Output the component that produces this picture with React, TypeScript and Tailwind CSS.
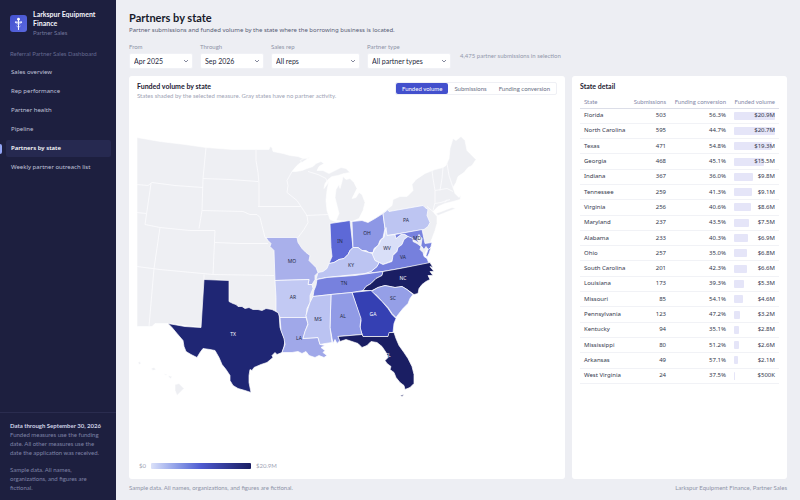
import React, { useState } from "react";

const NAV = [
  "Sales overview",
  "Rep performance",
  "Partner health",
  "Pipeline",
  "Partners by state",
  "Weekly partner outreach list",
];

const ROWS: [string, number, string, string, number][] = [
  ["Florida", 503, "56.3%", "$20.9M", 20.9],
  ["North Carolina", 595, "44.7%", "$20.7M", 20.7],
  ["Texas", 471, "54.8%", "$19.3M", 19.3],
  ["Georgia", 468, "45.1%", "$15.5M", 15.5],
  ["Indiana", 367, "36.0%", "$9.8M", 9.8],
  ["Tennessee", 259, "41.3%", "$9.1M", 9.1],
  ["Virginia", 256, "40.6%", "$8.6M", 8.6],
  ["Maryland", 237, "43.5%", "$7.5M", 7.5],
  ["Alabama", 233, "40.3%", "$6.9M", 6.9],
  ["Ohio", 257, "35.0%", "$6.8M", 6.8],
  ["South Carolina", 201, "42.3%", "$6.6M", 6.6],
  ["Louisiana", 173, "39.3%", "$5.3M", 5.3],
  ["Missouri", 85, "54.1%", "$4.6M", 4.6],
  ["Pennsylvania", 123, "47.2%", "$3.2M", 3.2],
  ["Kentucky", 94, "35.1%", "$2.8M", 2.8],
  ["Mississippi", 80, "51.2%", "$2.6M", 2.6],
  ["Arkansas", 49, "57.1%", "$2.1M", 2.1],
  ["West Virginia", 24, "37.5%", "$500K", 0.5],
];

const FILTERS = [
  { id: "from", label: "From", value: "Apr 2025", width: "w-16" },
  { id: "through", label: "Through", value: "Sep 2026", width: "w-16" },
  { id: "rep", label: "Sales rep", value: "All reps", width: "w-[89px]" },
  { id: "type", label: "Partner type", value: "All partner types", width: "w-[84px]" },
];

const MEASURES = ["Funded volume", "Submissions", "Funding conversion"];

// Inactive land: mainland outline, Lower Michigan, Long Island and Hawaii.
const LAND = [
  "M137 137L160 141L185 144L206 147L232 149L256 149L269 149L270 146L272 147L273 151L283 153L290 155L298 156L303 158L310 157L302 161L297 165L292 171L296 171L302 170L307 168L313 166L316 163L321 161L324 163L319 166L317 170L323 170L329 173L335 170L341 167L346 168L350 172L344 173L338 175L332 176L328 179L325 183L324 188L327 184L329 180L327 190L326 200L327 210L330 219L335 221L352 221L362 220L368 222L375 218L383 212L392 205L393 199L400 196L407 196L413 190L412 184L416 179L425 173L435 169L443 167L446 165L449 158L450 148L453 138L456 140L461 136L465 140L467 150L470 153L476 159L472 165L468 167L464 172L458 176L456 182L453 187L455 193L459 197L461 195L460 199L453 201L445 203L438 206L433 211L437 216L437 223L435 230L432 238L430 243L420 262L395 310L390 335L300 340L280 320L229 305L201 327L168 323L155 323L152 326L137 326Z",
  "M343 176L346 179L350 178L354 182L357 188L354 194L352 198L356 197L359 192L362 194L365 202L363 210L359 218L352 221L336 220L339 213L337 205L335 197L336 189L339 184L340 188L342 181Z",
  "M300 160L304 158L308 158L302 162Z",
  "M436 213L444 210L452 207L456 208L448 211L438 215Z",
  "M175 384L179 383L184 388L181 391L177 395L175 390Z",
  "M138 362L140 361L141 363L139 364Z",
  "M151 368L154 367L156 369L153 370Z",
  "M163 373L167 374L166 375Z",
  "M168 375L172 376L171 378L169 377Z",
];

const BORDERS =
  "M206 147L203 178L202 210L199 228M203 178L230 179L258 181M256 149L256 160L258 172L259 183L259 206M258 206L280 206L301 206M202 210L243 211L250 214L257 214L260 217L262 225L265 237M215 242L240 243L268 243M137 184L148 185L152 182L175 185L203 187M151 183L145 224L160 227L190 230L215 230L213 274M137 212L146 213M160 227L154 268L149 326M137 266L160 269L213 274L274 275M204 274L204 279M292 171L287 180L288 185L287 192L297 200L301 206L307 215L308 222L304 229L298 237M306 215L328 214M308 171L318 174L326 178L327 181M265 237L274 245M432 170L433 178L435 190L435 202L433 210M443 167L442 178L440 190M447 163L449 175L453 187M435 190L447 188L453 191M435 203L441 202L450 199M445 202L447 199M427 206L433 211";

const SHAPES: { d: string; fill: string }[] = [
  { fill: "#1f2674", d: "M204 279L229 280L229 301L233 303L236 304L238 306L242 306L245 308L249 307L253 309L258 309L262 310L266 308L272 309L276 311L279 312L280 327L282 332L285 340L284 346L282 352L277 354L275 352L272 355L273 357L267 362L261 364L254 367L252 370L250 369L249 375L249 382L251 392L245 390L238 388L233 385L230 380L230 375L226 369L222 364L219 357L215 350L210 349L203 348L200 352L197 357L191 354L186 351L184 346L183 340L177 333L172 327L168 323L185 326L201 327Z" },
  { fill: "#a9b0eb", d: "M266 237L297 237L298 242L302 248L306 252L310 255L309 260L313 264L316 267L318 272L315 275L315 279L312 284L308 284L309 279L275 280L274 250L270 246L271 243L268 240Z" },
  { fill: "#c2c9f3", d: "M275 280L309 279L308 284L312 284L313 288L310 295L310 302L307 308L306 317L280 317L278 312L276 311L276 297Z" },
  { fill: "#a0a8e9", d: "M280 317L306 317L308 323L305 331L303 338L318 337L320 344L325 345L321 347L325 350L323 352L327 355L324 357L319 355L315 357L309 355L306 351L302 353L298 351L292 352L282 352L285 344L284 338L281 330Z" },
  { fill: "#5d69d7", d: "M330 223L350 220L353 247L350 250L348 254L344 258L339 259L334 262L329 263L332 256L331 247Z" },
  { fill: "#8d97e5", d: "M352 221L362 220L368 222L375 218L383 213L385 228L383 237L380 240L378 245L374 248L373 252L369 252L366 250L362 250L358 247L353 247Z" },
  { fill: "#bdc5f2", d: "M383 213L388 209L389 211L423 205L425 207L428 209L427 215L430 222L428 226L424 229L387 235L385 228Z" },
  { fill: "#d9dff8", d: "M386 227L387 235L395 234L396 238L401 234L405 234L408 236L404 239L402 244L398 247L397 251L394 253L392 260L388 262L383 264L379 262L375 260L372 254L374 250L376 247L379 244L381 239L384 237Z" },
  { fill: "#7882de", d: "M395 234L422 229L425 243L432 242L431 246L429 250L426 246L424 249L421 245L422 238L419 234L417 239L420 243L415 240L411 238L408 236L405 234L401 234L396 238Z" },
  { fill: "#7680dd", d: "M365 273L371 271L377 266L379 262L383 264L392 261L393 255L397 251L398 247L402 244L404 239L408 236L413 238L413 241L417 243L421 246L420 249L423 252L424 256L427 258L429 263L400 268L383 271Z" },
  { fill: "#7680dd", d: "M428 249L431 247L429 253L427 257L426 255Z" },
  { fill: "#bcc4f2", d: "M316 279L318 272L323 271L327 268L329 263L334 262L339 259L344 258L348 254L350 250L353 247L358 247L362 250L369 252L372 253L375 260L379 262L377 266L371 271L365 273L345 275L326 277Z" },
  { fill: "#7781de", d: "M317 279L327 277L355 275L383 271L382 275L376 278L371 283L366 286L363 290L352 292L331 294L313 296L314 290L316 285Z" },
  { fill: "#1a1e63", d: "M383 271L400 268L430 262L433 267L430 266L434 271L430 271L433 275L428 275L430 279L426 281L422 284L419 288L418 293L414 294L407 289L402 286L395 287L390 286L385 285L378 287L372 290L363 290L366 286L371 283L376 278L382 275Z" },
  { fill: "#959fe7", d: "M371 291L378 287L385 285L390 286L395 287L402 286L407 289L413 294L410 298L408 303L403 308L399 313L396 317L392 313L388 307L382 301L377 295Z" },
  { fill: "#3540b3", d: "M352 292L371 290L377 296L382 301L388 308L392 314L396 318L394 323L393 332L390 332L388 336L363 336L360 328L361 320Z" },
  { fill: "#919be6", d: "M331 294L352 292L361 318L360 326L362 334L338 336L340 340L337 343L335 339L333 343L330 327Z" },
  { fill: "#bbc3f2", d: "M313 296L331 294L330 327L332 342L325 343L320 344L318 337L303 338L305 331L308 324L306 315L308 308L310 302Z" },
  { fill: "#1a1e63", d: "M338 336L362 334L363 336L388 336L389 332L394 332L396 338L399 345L404 352L408 358L412 366L414 374L414 383L410 387L405 389L404 385L400 382L396 377L394 372L390 369L391 366L387 363L385 360L388 357L386 352L382 346L377 342L371 341L367 345L362 347L358 343L352 341L346 339L340 341Z" },
  { fill: "#1a1e63", d: "M400 395L404 394L402 396Z" },
];

const LABELS: [string, number, number, string][] = [
  ["TX", 233, 335, "#ffffff"],
  ["MO", 292, 262, "#252a45"],
  ["AR", 293, 298, "#252a45"],
  ["LA", 299, 339, "#252a45"],
  ["IN", 340, 242, "#252a45"],
  ["OH", 367, 234, "#252a45"],
  ["PA", 406, 221, "#252a45"],
  ["WV", 387, 249, "#252a45"],
  ["MD", 417, 239, "#252a45"],
  ["VA", 403, 258, "#252a45"],
  ["KY", 351, 266, "#252a45"],
  ["TN", 344, 284, "#252a45"],
  ["NC", 403, 279, "#ffffff"],
  ["SC", 393, 299, "#252a45"],
  ["GA", 373, 315, "#ffffff"],
  ["AL", 343, 317, "#252a45"],
  ["MS", 318, 320, "#252a45"],
  ["FL", 388, 356, "#ffffff"],
];

function Logo() {
  return (
    <svg viewBox="0 0 17 17" className="size-[17px] shrink-0" aria-hidden="true">
      <defs>
        <linearGradient id="logo" x1="0" y1="0" x2="1" y2="1">
          <stop offset="0" stopColor="#4351cf" />
          <stop offset="1" stopColor="#5a68de" />
        </linearGradient>
      </defs>
      <rect width="17" height="17" rx="3" fill="url(#logo)" />
      <path d="M8.5 4V14.5" stroke="#fff" strokeWidth="1" strokeLinecap="round" />
      <circle cx="8.5" cy="4.2" r="1.4" fill="#fff" />
      <circle cx="5.9" cy="7.2" r="1" fill="#e4e8ff" />
      <circle cx="11.1" cy="7.2" r="1" fill="#e4e8ff" />
      <circle cx="8.5" cy="7.4" r="1.1" fill="#fff" />
      <path d="M5.9 7.2H11.1M8.5 9.6L6.6 8.4M8.5 9.6L10.4 8.4M8.5 12.6L6.8 11.2M8.5 12.6L10.2 11.2" stroke="#e4e8ff" strokeWidth="0.7" strokeLinecap="round" />
    </svg>
  );
}

function StateMap() {
  return (
    <svg viewBox="137 104 420 352" className="min-h-0 w-full flex-1" role="img" aria-label="Funded volume by state">
      <g fill="#eeeff3" stroke="#ffffff" strokeWidth="0.6" strokeLinejoin="round">
        {LAND.map((d) => (
          <path key={d} d={d} />
        ))}
      </g>
      <path d={BORDERS} fill="none" stroke="#fbfbfd" strokeWidth="0.9" strokeLinejoin="round" />
      <g stroke="#ffffff" strokeWidth="0.7" strokeLinejoin="round">
        {SHAPES.map((s) => (
          <path key={s.d} d={s.d} fill={s.fill} />
        ))}
      </g>
      <g className="font-['Noto_Sans',sans-serif] text-[5px]" textAnchor="middle">
        {LABELS.map(([t, x, y, c]) => (
          <text key={t} x={x} y={y} fill={c}>
            {t}
          </text>
        ))}
      </g>
    </svg>
  );
}

export default function App() {
  const [measure, setMeasure] = useState(MEASURES[0]);
  return (
    <div className="flex h-screen bg-[#edeef3] font-[Lato,sans-serif] text-[6px] leading-[9px] text-[#33384d]">
      <aside className="flex w-[116px] shrink-0 flex-col bg-[#1d1f3f]">
        <div className="flex items-center gap-[6px] pt-[10px] pl-[10px]">
          <Logo />
          <div>
            <p className="text-[7px] font-bold text-[#f3f4fb]">
              Larkspur Equipment
              <br />
              Finance
            </p>
            <p className="text-[#72779c]">Partner Sales</p>
          </div>
        </div>
        <p className="pt-3 pl-[10px] text-[#656a90]">Referral Partner Sales Dashboard</p>
        <nav className="flex flex-col gap-[2px] pt-[6px] font-['Noto_Sans',sans-serif]">
          {NAV.map((item) => {
            const active = item === "Partners by state";
            return (
              <a
                key={item}
                href="#"
                aria-current={active ? "page" : undefined}
                className="flex items-center gap-1"
              >
                <span className={active ? "h-[10px] w-[2px] rounded-r-sm bg-[#93a5f5]" : "h-[10px] w-[2px]"} />
                <span
                  className={
                    active
                      ? "mr-[5px] flex h-[17px] flex-1 items-center rounded-[2px] bg-[#262950] pl-[5px] font-semibold text-white"
                      : "mr-[5px] flex h-[17px] flex-1 items-center rounded-[2px] pl-[5px] text-[#c0c4da]"
                  }
                >
                  {item}
                </span>
              </a>
            );
          })}
        </nav>
        <div className="mt-auto border-t border-[#2a2c4f] px-[10px] pt-2 pb-2 text-[#7e83a6]">
          <p className="font-bold whitespace-nowrap text-[#cdd0e4]">Data through September 30, 2026</p>
          <p>Funded measures use the funding date. All other measures use the date the application was received.</p>
          <p className="pt-2">Sample data. All names, organizations, and figures are fictional.</p>
        </div>
      </aside>

      <main className="flex min-w-0 flex-1 flex-col px-[13px] pt-[10px] pb-2">
        <h1 className="text-[11px] leading-[15px] font-bold text-[#171a2b]">Partners by state</h1>
        <p className="font-['Noto_Sans',sans-serif] leading-[11px] text-[#565b73]">
          Partner submissions and funded volume by the state where the borrowing business is located.
        </p>

        <form className="flex items-center gap-[7px] pt-[6px]">
          {FILTERS.map((f) => (
            <div key={f.id} className={`${f.width} flex flex-col gap-[2px]`}>
              <label htmlFor={f.id} className="text-[#8f94a8]">
                {f.label}
              </label>
              <div className="relative">
                <select
                  id={f.id}
                  className="block h-4 w-full appearance-none rounded-[2px] border border-[#f0f1f6] bg-white pl-1 text-[7px] text-[#262a3d]"
                >
                  <option>{f.value}</option>
                </select>
                <svg viewBox="0 0 6 6" className="pointer-events-none absolute top-[5px] right-1 size-[6px]" aria-hidden="true">
                  <path d="M1 2L3 4L5 2" fill="none" stroke="#777c92" strokeWidth="0.9" />
                </svg>
              </div>
            </div>
          ))}
          <output className="pl-[2px] text-[#9398ac]">4,475 partner submissions in selection</output>
        </form>

        <div className="flex min-h-0 flex-1 gap-[7px] pt-[7px]">
          <section className="flex min-w-0 flex-1 flex-col rounded-[3px] bg-white px-2 pt-[6px] pb-[9px]">
            <header className="flex items-start justify-between">
              <div>
                <h2 className="text-[7px] font-bold text-[#1d2033]">Funded volume by state</h2>
                <p className="text-[#a0a4b5]">States shaded by the selected measure. Gray states have no partner activity.</p>
              </div>
              <div className="flex rounded-[2px] border border-[#eff0f5]">
                {MEASURES.map((m) => (
                  <button
                    key={m}
                    type="button"
                    aria-pressed={m === measure}
                    onClick={() => setMeasure(m)}
                    className={
                      m === measure
                        ? "h-[11px] rounded-[2px] bg-[#4350cd] px-[6px] text-white"
                        : "h-[11px] px-[6px] text-[#6b7086]"
                    }
                  >
                    {m}
                  </button>
                ))}
              </div>
            </header>
            <StateMap />
            <div className="flex items-center gap-[5px] pl-[2px] text-[#a0a4b5]">
              <span>$0</span>
              <span className="h-[6px] w-[100px] rounded-[1px] bg-linear-to-r from-[#dbe1f9] via-[#4f5bd1] to-[#1a1e63]" />
              <span>$20.9M</span>
            </div>
          </section>

          <section className="w-[215px] shrink-0 rounded-[3px] bg-white px-2 pt-[6px]">
            <h2 className="text-[7px] font-bold text-[#1d2033]">State detail</h2>
            <table className="mt-[5px] h-[288px] w-full table-fixed">
              <colgroup>
                <col />
                <col className="w-[42px]" />
                <col className="w-[60px]" />
                <col className="w-[49px]" />
              </colgroup>
              <thead>
                <tr className="border-b border-[#dcdee8] text-right whitespace-nowrap text-[#8588a8]">
                  <th scope="col" className="h-3 pl-1 text-left font-normal">State</th>
                  <th scope="col" className="pr-1 font-normal">Submissions</th>
                  <th scope="col" className="pr-1 font-normal">Funding conversion</th>
                  <th scope="col" className="pr-1 font-normal">Funded volume</th>
                </tr>
              </thead>
              <tbody className="font-['Noto_Sans',sans-serif]">
                {ROWS.map(([name, subs, conv, vol, amount]) => (
                  <tr key={name} className="border-b border-[#f1f2f6] text-right">
                    <td className="pl-1 text-left whitespace-nowrap">{name}</td>
                    <td className="pr-1">{subs}</td>
                    <td className="pr-1">{conv}</td>
                    <td className="px-1">
                      <div className="grid items-center">
                        <span
                          className="col-start-1 row-start-1 h-2 rounded-[1px] bg-[#e5e5f8]"
                          style={{ width: `${(amount / 20.9) * 100}%` }}
                        />
                        <span className="col-start-1 row-start-1">{vol}</span>
                      </div>
                    </td>
                  </tr>
                ))}
              </tbody>
            </table>
          </section>
        </div>

        <footer className="flex justify-between pt-1 text-[#8f94a8]">
          <span>Sample data. All names, organizations, and figures are fictional.</span>
          <span>Larkspur Equipment Finance, Partner Sales</span>
        </footer>
      </main>
    </div>
  );
}
